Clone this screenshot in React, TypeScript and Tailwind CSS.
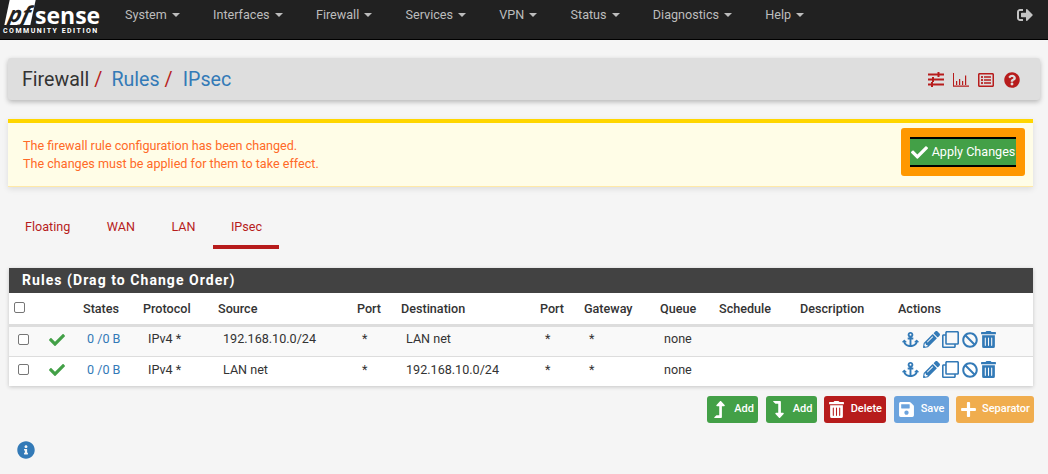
import React from 'react';
import {
  FaAnchor,
  FaBan,
  FaCheck,
  FaInfoCircle,
  FaLevelDownAlt,
  FaLevelUpAlt,
  FaPencilAlt,
  FaPlus,
  FaQuestionCircle,
  FaRegClone,
  FaRegListAlt,
  FaSave,
  FaSignOutAlt,
  FaTrashAlt,
} from 'react-icons/fa';

const navItems = ['System', 'Interfaces', 'Firewall', 'Services', 'VPN', 'Status', 'Diagnostics', 'Help'];
const tabs = ['Floating', 'WAN', 'LAN', 'IPsec'];

const rules = [
  { source: '192.168.10.0/24', destination: 'LAN net' },
  { source: 'LAN net', destination: '192.168.10.0/24' },
];

const Checkbox = () => (
  <span className="block w-[11px] h-[11px] rounded-[2px] border border-[#767676] bg-white" />
);

const SlidersIcon = () => (
  <svg viewBox="0 0 16 15" className="w-4 h-[15px]" fill="#b71c1c">
    <path d="M0 1.5h16v2H0zM0 6.5h16v2H0zM0 11.5h16v2H0z" />
    <path d="M9.5 0h2v5h-2zM4 5h2v5H4zM3 10h2v5H3z" />
  </svg>
);

const BarChartIcon = () => (
  <svg viewBox="0 0 16 14" className="w-4 h-[14px]" fill="#b71c1c">
    <path d="M0 0h1v12.6h16v1.2H0z" />
    <path d="M3 8h1.2v4H3zM6 6h1.2v6H6zM9 8h1.2v4H9zM12 2.5h1.2V12H12z" />
  </svg>
);

const Navbar = () => (
  <nav className="h-10 bg-[#212121] border-b border-black flex items-center">
    <div className="w-[125px] h-full shrink-0 flex flex-col">
      <div className="flex items-start h-[26px] pl-[7px]">
        <span className="w-[26px] h-[25px] bg-white text-[#212121] italic font-bold text-[22px] leading-[26px] text-center -skew-x-12 font-['Open_Sans',sans-serif]">
          pf
        </span>
        <span className="ml-[2px] text-white font-bold text-[23px] leading-[30px] font-['Open_Sans',sans-serif]">
          sense
        </span>
      </div>
      <span className="pl-[3px] text-white font-bold text-[7px] leading-[8px] tracking-[1.5px] mt-[1px] whitespace-nowrap">
        COMMUNITY EDITION
      </span>
    </div>
    <ul className="flex gap-[33.3px] pb-[9px] text-[12.6px] text-[#bdbdbd]">
      {navItems.map((item) => (
        <li key={item} className="flex items-center gap-[5px]">
          {item}
          <span className="w-0 h-0 border-x-[4px] border-x-transparent border-t-[4px] border-t-[#bdbdbd]" />
        </li>
      ))}
    </ul>
    <FaSignOutAlt className="ml-auto mr-[15px] mb-[9px] w-4 h-4 text-[#c4c4c4]" />
  </nav>
);

const Breadcrumb = () => (
  <div className="mt-[18px] mx-2 h-[42px] pt-[1px] bg-[#dedede] rounded-[3px] shadow-[0_2px_5px_rgba(0,0,0,0.26)] flex items-center pl-[14px] pr-[14px] text-[19.6px]">
    <span className="text-[#333]">Firewall</span>
    <span className="text-[#b71c1c] ml-[5px]">/</span>
    <span className="text-[#337ab7] ml-[9px]">Rules</span>
    <span className="text-[#b71c1c] ml-[5px]">/</span>
    <span className="text-[#337ab7] ml-[10px]">IPsec</span>
    <div className="ml-auto mr-[6px] flex items-center gap-[9px] text-[#b71c1c]">
      <SlidersIcon />
      <BarChartIcon />
      <FaRegListAlt className="w-4 h-4" />
      <FaQuestionCircle className="w-4 h-4 ml-[1px]" />
    </div>
  </div>
);

const Alert = () => (
  <div className="mt-[19px] mx-2 mr-[15px] h-[68px] bg-[#fffde7] border-t-4 border-[#ffd600] border-b border-b-[#ffe9a8] shadow-[0_2px_6px_rgba(0,0,0,0.1)] flex items-center pl-[15px] pr-2">
    <p className="text-[12.6px] leading-[18px] text-[#ff6a28]">
      The firewall rule configuration has been changed.
      <br />
      The changes must be applied for them to take effect.
    </p>
    <div className="ml-auto mb-[6px] p-[9px] bg-[#ff9800] rounded-[3px]">
      <button className="w-[106px] h-[30px] pt-[1px] bg-[#43a047] border-y-2 border-black text-white text-[12.6px] flex items-center justify-center gap-[4px] whitespace-nowrap">
        <FaCheck className="w-[17px] h-[17px] shrink-0" />
        Apply Changes
      </button>
    </div>
  </div>
);

const Tabs = () => (
  <ul className="mt-[21px] ml-2 flex h-[41px] text-[12.6px] text-[#b71c1c]">
    {tabs.map((tab) => (
      <li
        key={tab}
        className={
          tab === 'IPsec'
            ? 'w-[66px] text-center pt-[10px] border-b-4 border-[#b71c1c] -ml-[1.5px]'
            : 'px-[17px] pt-[10px] mr-[2.5px]'
        }
      >
        {tab}
      </li>
    ))}
  </ul>
);

const RulesTable = () => (
  <section className="mt-[19px] mx-[9px] mr-[15px] bg-white shadow-[0_1px_4px_rgba(0,0,0,0.2)]">
    <h2 className="h-[25px] bg-[#424242] text-white font-bold text-[14px] leading-[25px] tracking-[1.05px] pl-[13px]">
      Rules (Drag to Change Order)
    </h2>
    <table className="w-full table-fixed text-[12.6px] text-[#333] border-collapse">
      <colgroup>
        <col className="w-[31px]" />
        <col className="w-[38px]" />
        <col className="w-[60px]" />
        <col className="w-[75px]" />
        <col className="w-[139px]" />
        <col className="w-[44px]" />
        <col className="w-[139px]" />
        <col className="w-[44px]" />
        <col className="w-[76px]" />
        <col className="w-[59px]" />
        <col className="w-[81px]" />
        <col className="w-[98px]" />
        <col />
      </colgroup>
      <thead>
        <tr className="h-[32px] border-b-[3px] border-[#ddd] text-left">
          <th className="pl-[5px] pb-[2px]"><Checkbox /></th>
          <th />
          <th className="pl-[5px] pt-[2px] font-medium">States</th>
          <th className="pl-[5px] pt-[2px] font-medium">Protocol</th>
          <th className="pl-[5px] pt-[2px] font-medium">Source</th>
          <th className="pl-[5px] pt-[2px] font-medium">Port</th>
          <th className="pl-[5px] pt-[2px] font-medium">Destination</th>
          <th className="pl-[5px] pt-[2px] font-medium">Port</th>
          <th className="pl-[5px] pt-[2px] font-medium">Gateway</th>
          <th className="pl-[5px] pt-[2px] font-medium">Queue</th>
          <th className="pl-[5px] pt-[2px] font-medium">Schedule</th>
          <th className="pl-[5px] pt-[2px] font-medium">Description</th>
          <th className="pl-[5px] pt-[2px] font-medium">Actions</th>
        </tr>
      </thead>
      <tbody>
        {rules.map((rule, i) => (
          <tr key={i} className={i === 0 ? 'h-[31px] bg-[#f9f9f9] border-b border-[#ddd]' : 'h-[30px]'}>
            <td className="pl-[9px] pb-[3px]"><Checkbox /></td>
            <td className="pl-[9px] pb-[3px]"><FaCheck className="w-4 h-4 text-[#43a047]" /></td>
            <td className="pl-[9px] pb-[2.5px] text-[#337ab7]">0 /0 B</td>
            <td className="pl-[10px] pb-[2.5px]">IPv4 *</td>
            <td className="pl-[10px] pb-[2.5px]">{rule.source}</td>
            <td className="pl-[10px] pb-[2.5px]">*</td>
            <td className="pl-[10px] pb-[2.5px]">{rule.destination}</td>
            <td className="pl-[10px] pb-[2.5px]">*</td>
            <td className="pl-[10px] pb-[2.5px]">*</td>
            <td className="pl-[9px] pb-[2.5px]">none</td>
            <td />
            <td />
            <td className="pl-[9px] pb-[3px]">
              <div className="flex items-center gap-[3px] text-[#337ab7]">
                <FaAnchor className="w-[17px] h-[17px]" />
                <FaPencilAlt className="w-[17px] h-[17px] ml-[1px]" />
                <FaRegClone className="w-[17px] h-[17px] -ml-[1px]" />
                <FaBan className="w-4 h-4" />
                <FaTrashAlt className="w-[15px] h-[17px]" />
              </div>
            </td>
          </tr>
        ))}
      </tbody>
    </table>
  </section>
);

const ActionButton = ({
  icon,
  label,
  className,
}: {
  icon: React.ReactNode;
  label: string;
  className: string;
}) => (
  <button className={`h-[27px] rounded-[3px] flex items-center justify-between pl-[4px] pr-[4px] text-white text-[11px] font-medium ${className}`}>
    {icon}
    {label}
  </button>
);

const App = () => (
  <div className="w-[1048px] h-[474px] overflow-hidden bg-[#f5f5f5] font-['Roboto',sans-serif]">
    <Navbar />
    <Breadcrumb />
    <Alert />
    <Tabs />
    <RulesTable />
    <div className="mt-[10px] mr-[14px] flex justify-end gap-[7.5px]">
      <ActionButton className="w-[51px] bg-[#43a047]" label="Add" icon={<FaLevelUpAlt className="w-[17px] h-[17px]" />} />
      <ActionButton className="w-[51px] bg-[#43a047]" label="Add" icon={<FaLevelDownAlt className="w-[17px] h-[17px]" />} />
      <ActionButton className="w-[62px] bg-[#b71c1c]" label="Delete" icon={<FaTrashAlt className="w-[17px] h-[17px]" />} />
      <ActionButton className="w-[55px] bg-[#6ba3dd]" label="Save" icon={<FaSave className="w-[17px] h-[17px]" />} />
      <ActionButton className="w-[78px] bg-[#f0ad4e]" label="Separator" icon={<FaPlus className="w-[17px] h-[17px]" />} />
    </div>
    <div className="mt-[18px] ml-[17px]">
      <FaInfoCircle className="w-[18px] h-[18px] text-[#337ab7]" />
    </div>
  </div>
);

export default App;
